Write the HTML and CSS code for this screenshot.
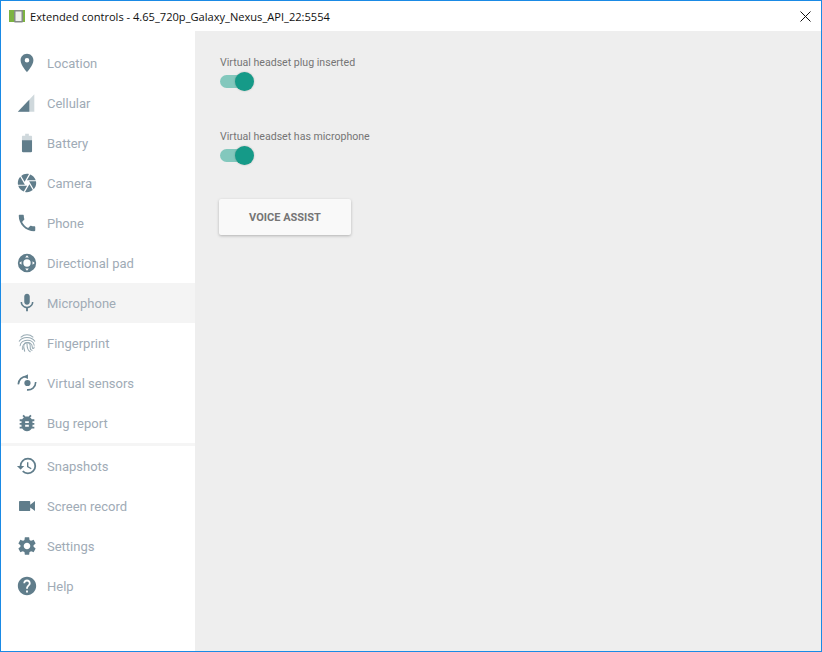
FILE: index.html
```html
<!DOCTYPE html>
<html lang="en">
<head>
<meta charset="utf-8">
<title>Extended controls</title>
<link rel="stylesheet" href="styles.css">
</head>
<body>
<div class="window">
  <header class="titlebar">
    <svg class="app-icon" viewBox="0 0 16 14"><rect width="16" height="12" y="1" fill="#7cb342"/><rect x="5" y="1" width="9" height="12.500" rx="1" fill="#858a87"/><rect x="6.500" y="2.500" width="6" height="9.500" fill="#eef0ee"/></svg>
    <span class="title">Extended controls - 4.65_720p_Galaxy_Nexus_API_22:5554</span>
    <svg class="close" viewBox="0 0 11 11"><path d="M0.5 0.5L10.5 10.5M10.5 0.5L0.5 10.5" stroke="#111" stroke-width="1" fill="none"/></svg>
  </header>
  <div class="body">
    <nav class="sidebar">
      <div class="group">
        <div class="item"><svg class="icon" viewBox="0 0 24 24"><path d="M12 2C8.13 2 5 5.13 5 9c0 5.25 7 13 7 13s7-7.75 7-13c0-3.87-3.13-7-7-7zm0 9.5a2.5 2.5 0 1 1 0-5 2.5 2.5 0 0 1 0 5z"/></svg><span>Location</span></div>
        <div class="item"><svg class="icon" viewBox="0 0 24 24"><path opacity=".3" d="M20 2.500L20 21.500L2 21.500z"/><path d="M14.500 8.500L14.500 21.500L2 21.500z"/></svg><span>Cellular</span></div>
        <div class="item"><svg class="icon" viewBox="0 0 24 24"><path opacity=".3" d="M10 2h4v2h2.500c.5 0 1 .5 1 1v5h-11V5c0-.5.5-1 1-1H10z"/><path d="M6.500 9h11v12c0 .5-.5 1-1 1h-9c-.5 0-1-.5-1-1z"/></svg><span>Battery</span></div>
        <div class="item"><svg class="icon" viewBox="0 0 24 24"><path d="M9.400 10.500l4.770-8.260C13.470 2.090 12.750 2 12 2c-2.400 0-4.600.85-6.320 2.260l3.660 6.340.06-.1zM21.540 9c-.92-2.920-3.150-5.260-6-6.340L11.880 9h9.660zm.26 1h-7.490l.29.500 4.760 8.250C21 16.970 22 14.610 22 12c0-.69-.07-1.350-.2-2zM8.540 12l-3.900-6.750C3.010 7.030 2 9.390 2 12c0 .69.07 1.350.2 2h7.490l-1.150-2zm-6.080 3c.92 2.920 3.150 5.260 6 6.340L12.120 15H2.460zm11.270 0l-3.900 6.760c.7.150 1.420.24 2.170.24 2.400 0 4.600-.85 6.320-2.260l-3.660-6.340-.93 1.600z"/></svg><span>Camera</span></div>
        <div class="item"><svg class="icon" viewBox="0 0 24 24"><path d="M6.620 10.790c1.440 2.830 3.760 5.140 6.590 6.590l2.200-2.200c.27-.27.670-.36 1.020-.24 1.120.37 2.330.57 3.570.57.550 0 1 .45 1 1V20c0 .55-.45 1-1 1-9.390 0-17-7.610-17-17 0-.55.450-1 1-1h3.500c.55 0 1 .45 1 1 0 1.250.2 2.450.57 3.570.110.350.030.740-.250 1.020l-2.200 2.200z"/></svg><span>Phone</span></div>
        <div class="item"><svg class="icon" viewBox="0 0 24 24"><path fill-rule="evenodd" d="M12 2a10 10 0 1 1 0 20 10 10 0 0 1 0-20zm0 6a4 4 0 1 0 0 8 4 4 0 0 0 0-8zM12 3.500l-2 2.500h4zM12 20.500l2-2.500h-4zM3.500 12l2.500 2v-4zM20.500 12l-2.500-2v4z"/></svg><span>Directional pad</span></div>
        <div class="item active"><svg class="icon" viewBox="0 0 24 24"><path d="M12 14c1.660 0 2.990-1.340 2.990-3L15 5c0-1.660-1.340-3-3-3S9 3.340 9 5v6c0 1.660 1.340 3 3 3zm5.300-3c0 3-2.540 5.100-5.300 5.100S6.700 14 6.700 11H5c0 3.410 2.720 6.230 6 6.720V21h2v-3.280c3.280-.480 6-3.300 6-6.720h-1.700z"/></svg><span>Microphone</span></div>
        <div class="item"><svg class="icon print" viewBox="0 0 24 24"><g fill="none" stroke="currentColor" stroke-width="1.100" stroke-linecap="round"><path d="M5.500 5.500C9 2.300 15 2.300 18.500 5.500"/><path d="M3.500 10C7 4.500 17 4.500 20.500 10"/><path d="M4.500 15C5 7.500 19 6.500 19.800 14.500"/><path d="M7 19C5.500 11 17.500 8.500 17.800 16.500c0 2 2 2 2-.2"/><path d="M9.500 21C7 14.500 9 11.500 12 11.500c4 0 3.500 4 3.500 5.500s.5 3 2 3"/><path d="M12 12.500c0 4 .5 7.500 3.500 9"/></g></svg><span>Fingerprint</span></div>
        <div class="item"><svg class="icon" viewBox="0 0 24 24"><circle cx="12.500" cy="12" r="3.400"/><path fill="none" stroke="currentColor" stroke-width="1.800" d="M2.500 13.500C3 8 7 5 12 4.500"/><path d="M8.500 5.500L13 2.500V7.500z"/><path fill="none" stroke="currentColor" stroke-width="1.800" d="M21.500 11c0 5.500-4.500 9-9.500 8.500"/></svg><span>Virtual sensors</span></div>
        <div class="item"><svg class="icon" viewBox="0 0 24 24"><path d="M20 8h-2.810c-.450-.780-1.070-1.450-1.820-1.960L17 4.410 15.590 3l-2.170 2.170C12.960 5.060 12.490 5 12 5c-.490 0-.960.060-1.410.170L8.410 3 7 4.410l1.620 1.630C7.880 6.550 7.260 7.220 6.810 8H4v2h2.090c-.050.330-.090.660-.090 1v1H4v2h2v1c0 .340.040.670.090 1H4v2h2.810c1.040 1.790 2.970 3 5.190 3s4.150-1.210 5.190-3H20v-2h-2.090c.050-.330.090-.660.090-1v-1h2v-2h-2v-1c0-.340-.040-.670-.090-1H20V8zm-6 8h-4v-2h4v2zm0-4h-4v-2h4v2z"/></svg><span>Bug report</span></div>
      </div>
      <div class="group divided">
        <div class="item"><svg class="icon" viewBox="0 0 24 24"><path d="M13 3a9 9 0 0 0-9 9H1l3.890 3.890.070.140L9 12H6c0-3.870 3.130-7 7-7s7 3.130 7 7-3.130 7-7 7c-1.930 0-3.680-.790-4.940-2.060l-1.420 1.420A8.954 8.954 0 0 0 13 21a9 9 0 0 0 0-18zm-1 5v5l4.280 2.540.720-1.210-3.500-2.080V8H12z"/></svg><span>Snapshots</span></div>
        <div class="item"><svg class="icon" viewBox="0 0 24 24"><path d="M15.500 10.500V7.500c0-.5-.5-1-1-1H4.300c-.5 0-1 .5-1 1v9c0 .5.5 1 1 1h10.200c.5 0 1-.5 1-1v-3l5.200 4V6.500z"/></svg><span>Screen record</span></div>
        <div class="item"><svg class="icon" viewBox="0 0 24 24"><path d="M19.140 12.940c.040-.300.060-.610.060-.940 0-.320-.020-.640-.070-.940l2.030-1.580c.180-.140.230-.410.120-.610l-1.920-3.320c-.120-.220-.370-.290-.590-.220l-2.390.960c-.500-.380-1.030-.700-1.620-.940l-.360-2.540c-.040-.240-.240-.410-.480-.410h-3.840c-.240 0-.430.170-.470.410l-.360 2.540c-.590.240-1.130.570-1.620.940l-2.390-.960c-.220-.080-.470 0-.590.220L2.740 8.870c-.120.210-.080.470.120.610l2.030 1.580c-.050.300-.090.630-.090.940s.020.640.07.940l-2.030 1.580c-.180.140-.230.410-.12.610l1.920 3.320c.120.220.370.290.590.220l2.390-.960c.500.380 1.030.700 1.620.940l.360 2.540c.050.240.240.410.480.410h3.840c.240 0 .440-.170.470-.410l.360-2.540c.590-.240 1.130-.560 1.620-.940l2.390.960c.220.080.470 0 .590-.220l1.920-3.320c.120-.220.070-.470-.120-.610l-2.010-1.580zM12 15.600c-1.980 0-3.600-1.620-3.600-3.600s1.620-3.600 3.600-3.600 3.600 1.620 3.600 3.600-1.620 3.600-3.600 3.600z"/></svg><span>Settings</span></div>
        <div class="item"><svg class="icon" viewBox="0 0 24 24"><path d="M12 2C6.480 2 2 6.480 2 12s4.480 10 10 10 10-4.480 10-10S17.520 2 12 2zm1 17h-2v-2h2v2zm2.070-7.750l-.900.920C13.450 12.900 13 13.500 13 15h-2v-.500c0-1.100.450-2.100 1.170-2.830l1.240-1.260c.370-.360.590-.860.590-1.410 0-1.100-.900-2-2-2s-2 .900-2 2H8c0-2.210 1.790-4 4-4s4 1.790 4 4c0 .880-.360 1.680-.930 2.250z"/></svg><span>Help</span></div>
      </div>
    </nav>
    <main class="content">
      <div class="field">
        <label class="label">Virtual headset plug inserted</label>
        <div class="switch"><div class="thumb"></div></div>
      </div>
      <div class="field">
        <label class="label">Virtual headset has microphone</label>
        <div class="switch"><div class="thumb"></div></div>
      </div>
      <button class="btn">VOICE ASSIST</button>
    </main>
  </div>
</div>
</body>
</html>
```
FILE: styles.css
```css
* { box-sizing: border-box; }
html, body { margin: 0; height: 100%; }
body { font-family: Roboto, sans-serif; background: #fff; }
.window {
  width: 822px;
  height: 652px;
  border: 1px solid #1a8ae5;
  display: flex;
  flex-direction: column;
  overflow: hidden;
}
.titlebar {
  height: 30px;
  flex: none;
  background: #fff;
  display: flex;
  align-items: center;
  padding-left: 8px;
  padding-right: 10px;
}
.app-icon { width: 16px; height: 14px; flex: none; }
.title {
  margin-left: 5px;
  font: 11.1px "Open Sans", "Liberation Sans", sans-serif;
  color: #111;
  flex: 1;
}
.close { width: 11px; height: 11px; flex: none; }
.body { flex: 1; display: flex; min-height: 0; }
.sidebar {
  width: 194px;
  flex: none;
  background: #fff;
  padding-top: 12px;
}
.divided { border-top: 3px solid #f5f5f5; }
.item {
  height: 40px;
  display: flex;
  align-items: center;
  padding-left: 15px;
  font-size: 13px;
  color: #a0abb6;
}
.item.active { background: #f4f4f4; }
.icon {
  width: 22px;
  height: 22px;
  flex: none;
  fill: #607d8b;
  color: #607d8b;
  margin-right: 9px;
}
.print { opacity: .65; }
.content {
  flex: 1;
  background: #eee;
  padding: 25px 24px 0;
}
.field { margin-bottom: 42px; }
.field:last-of-type { margin-bottom: 37px; }
.label {
  display: block;
  font-size: 10.6px;
  line-height: 14px;
  margin-left: 1px;
  color: #757575;
}
.switch {
  position: relative;
  width: 28px;
  height: 13px;
  margin-top: 5px;
  margin-left: 1px;
  border-radius: 7px;
  background: #83c8bd;
}
.thumb {
  position: absolute;
  left: 15px;
  top: -3px;
  width: 19px;
  height: 19px;
  border-radius: 50%;
  background: #159a88;
  box-shadow: 0 0 2px rgba(0,0,0,.25);
}
.btn {
  display: block;
  width: 132px;
  height: 36px;
  border: 0;
  border-radius: 2px;
  background: #f9f9f9;
  color: #757575;
  font: 700 11px Roboto, sans-serif;
  box-shadow: 0 1px 3px rgba(0,0,0,.25);
}
```
